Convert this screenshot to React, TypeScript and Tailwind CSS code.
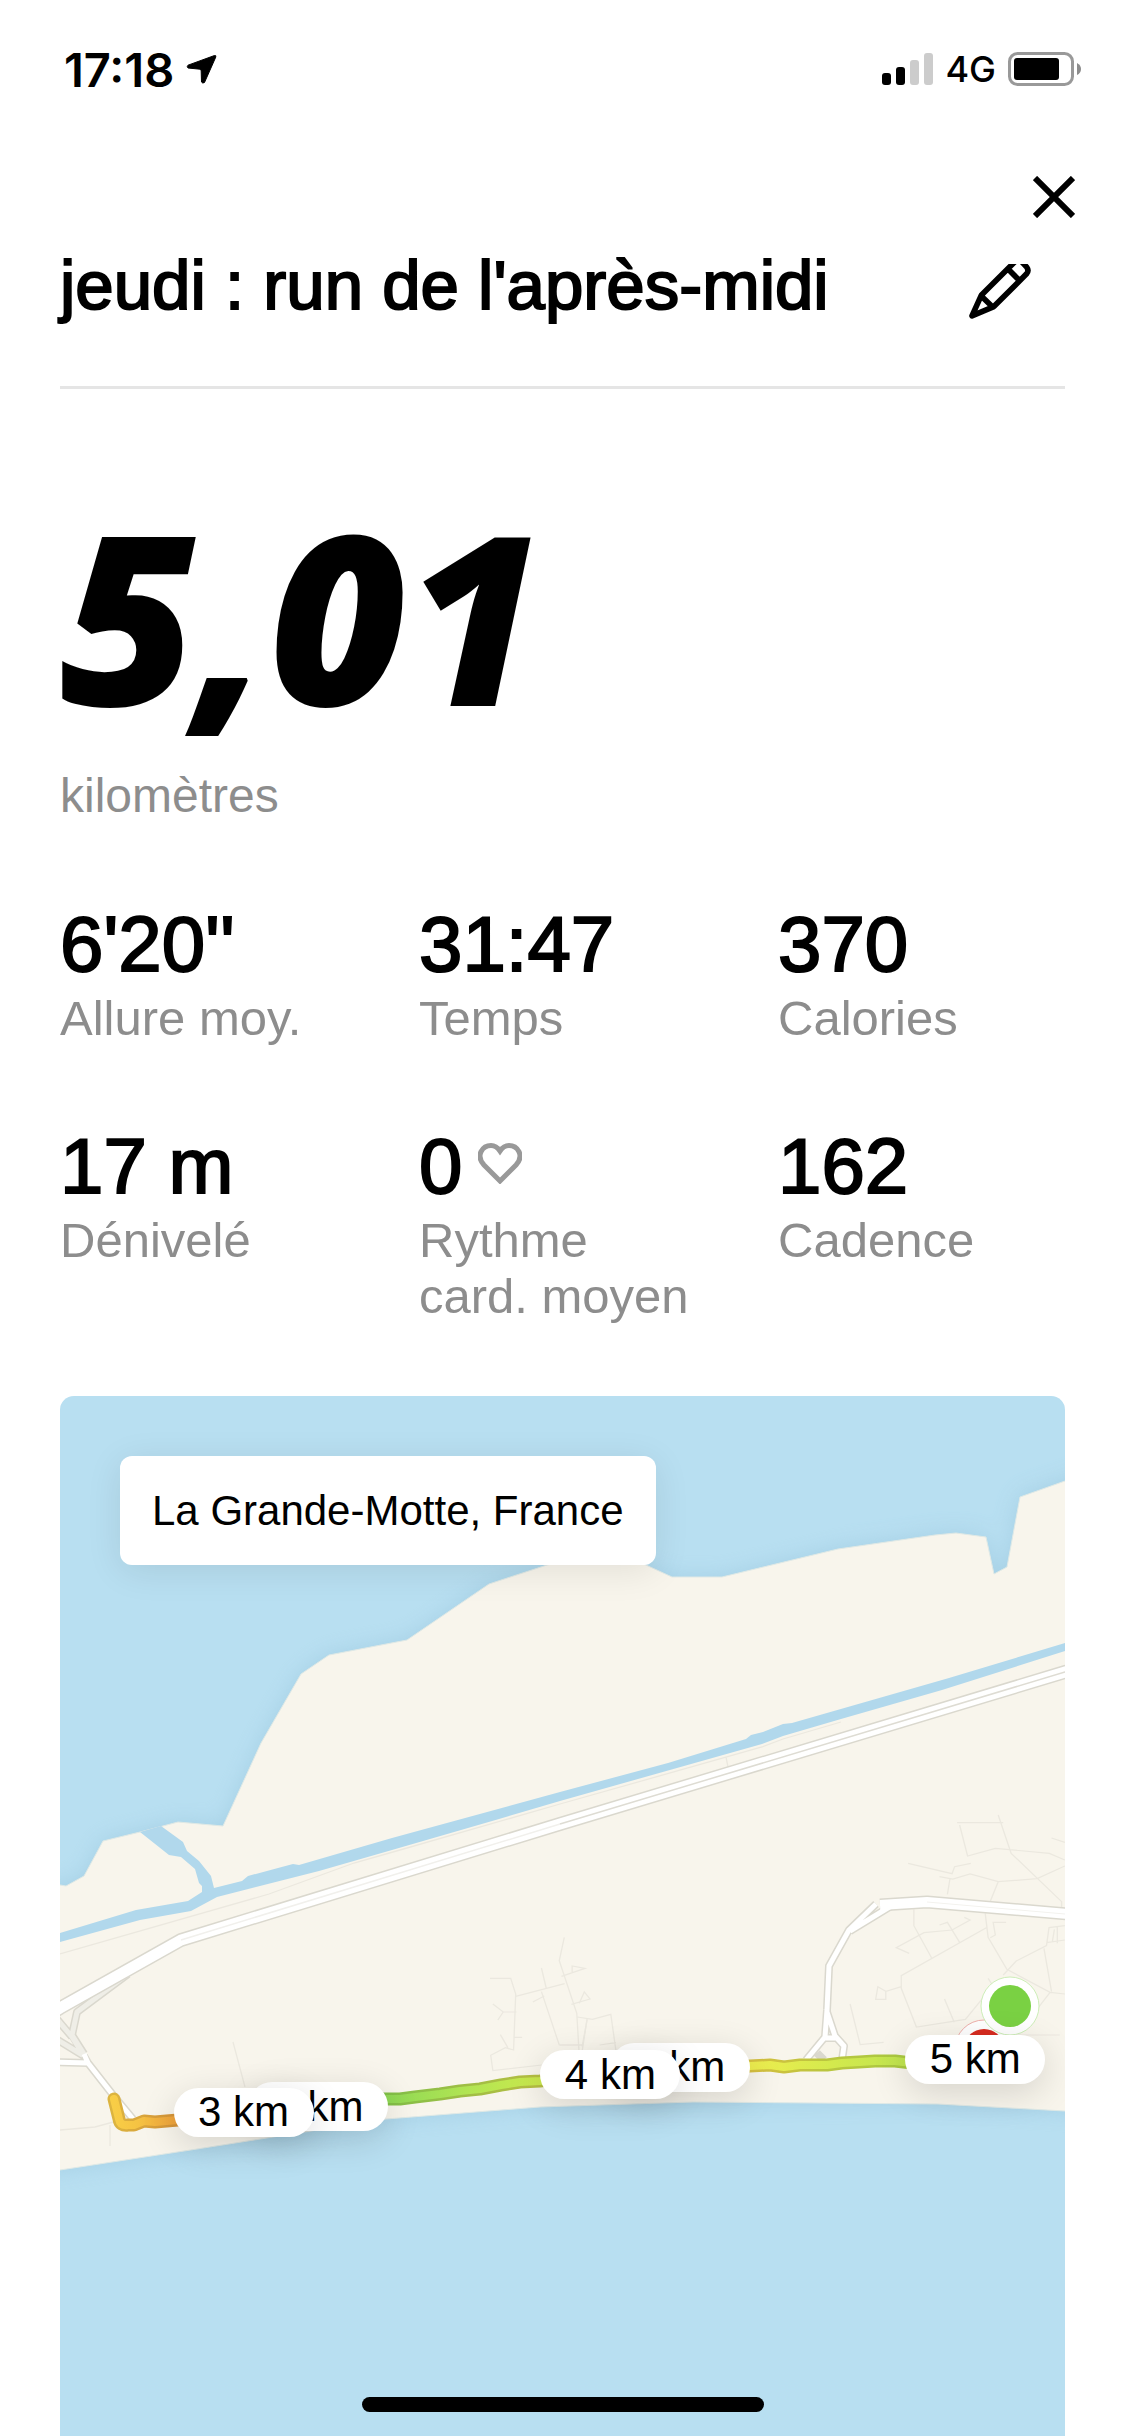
type Stat = { value: string; label: string; heart?: boolean };

const stats: Stat[] = [
  { value: "6'20''", label: "Allure moy." },
  { value: "31:47", label: "Temps" },
  { value: "370", label: "Calories" },
  { value: "17 m", label: "Dénivelé" },
  { value: "0", label: "Rythme card. moyen", heart: true },
  { value: "162", label: "Cadence" },
];

const ROUTE =
  "M114 2099 L119 2119 Q120 2126 128 2125 L134 2125 L144 2121 L155 2122 L178 2120 L250 2113 L330 2104 L383 2099 L400 2099 L415 2097 L440 2094 L460 2091 L480 2089 L501 2085 L520 2082 L540 2081 L620 2072 L700 2068 L750 2066 L770 2065 L784 2067 L800 2065 L827 2065 L842 2063 L859 2062 L875 2061 L895 2061 L912 2063";

function StatusBar() {
  return (
    <div className="flex h-[138px] items-center justify-between pl-[64px] pr-[43px] font-['Inter',sans-serif] text-black">
      <div className="flex items-center gap-3">
        <span className="text-[47px] font-semibold leading-none">17:18</span>
        <svg className="h-[30px] w-[31px]" viewBox="0 0 31 30" aria-hidden="true">
          <path
            d="M28.500 1.500 L2 11.200 Q0.500 12.500 2 14 L14 15.200 Q15.200 15.400 15.200 17 L15.500 28 Q16.500 29.800 18.500 28.500 L29.800 3 Q30.200 1 28.500 1.500 Z"
            stroke="#000"
            strokeLinejoin="round"
          />
        </svg>
      </div>
      <div className="flex items-center gap-3">
        <div className="flex h-8 items-end gap-[5px]" aria-hidden="true">
          <span className="h-3 w-[9px] rounded-[3px] bg-black" />
          <span className="h-[18px] w-[9px] rounded-[3px] bg-black" />
          <span className="h-[25px] w-[9px] rounded-[3px] bg-[#cccccc]" />
          <span className="h-8 w-[9px] rounded-[3px] bg-[#cccccc]" />
        </div>
        <span className="text-[36px] font-medium leading-none">4G</span>
        <svg className="h-[34px] w-[74px]" viewBox="0 0 74 34" aria-hidden="true">
          <rect x="1.500" y="1.500" width="63" height="31" rx="8" fill="none" stroke="#999" strokeWidth="3" />
          <rect x="6" y="6" width="45" height="22" rx="3" />
          <path d="M69 11 Q73 13 73 17 Q73 21 69 23 Z" fill="#8c8c8c" />
        </svg>
      </div>
    </div>
  );
}

function StatItem({ value, label, heart }: Stat) {
  return (
    <div className="flex flex-col-reverse justify-end">
      <dt className="mt-1.5 text-[49px] leading-[56px] text-[#8d8d8d]">{label}</dt>
      <dd className="flex items-center gap-4 text-[78px] leading-[80px] [-webkit-text-stroke:2px_black]">
        {value}
        {heart && (
          <svg className="mb-1.5 h-[41px] w-[44px]" viewBox="0 0 44 41" fill="none" aria-hidden="true">
            <path
              d="M22 38 L6 22 C-3 12 5 2.500 13 2.500 C17 2.500 20 5 22 8 C24 5 27 2.500 31 2.500 C39 2.500 47 12 38 22 Z"
              stroke="#999"
              strokeWidth="5"
            />
          </svg>
        )}
      </dd>
    </div>
  );
}

function KmPill({ text, place }: { text: string; place: string }) {
  return (
    <span
      className={`absolute flex h-[49px] w-[140px] items-center justify-center rounded-full bg-white text-[42px] leading-none shadow-[0_9px_36px_rgba(0,0,0,0.14)] ${place}`}
    >
      {text}
    </span>
  );
}

function MapDrawing() {
  return (
    <svg className="block w-full" viewBox="60 1396 1005 1040" fill="none" aria-hidden="true">
      <defs>
        <filter id="coast" x="-10%" y="-10%" width="120%" height="120%">
          <feGaussianBlur stdDeviation="11" />
        </filter>
        <linearGradient id="route" gradientUnits="userSpaceOnUse" x1="114" y1="0" x2="912" y2="0">
          <stop offset="0" stopColor="#f8cd46" />
          <stop offset="0.030" stopColor="#f5c343" />
          <stop offset="0.080" stopColor="#efa13b" />
          <stop offset="0.337" stopColor="#8ed855" />
          <stop offset="0.440" stopColor="#b0e453" />
          <stop offset="0.530" stopColor="#cae94d" />
          <stop offset="0.800" stopColor="#eeee4f" />
          <stop offset="0.900" stopColor="#d3e94d" />
          <stop offset="1" stopColor="#bee44f" />
        </linearGradient>
        <linearGradient id="routeEdge" gradientUnits="userSpaceOnUse" x1="114" y1="0" x2="912" y2="0">
          <stop offset="0" stopColor="#dcb43f" />
          <stop offset="0.080" stopColor="#d59238" />
          <stop offset="0.337" stopColor="#80c048" />
          <stop offset="0.440" stopColor="#9fbd45" />
          <stop offset="0.530" stopColor="#b6bf42" />
          <stop offset="0.800" stopColor="#d6c03f" />
          <stop offset="0.900" stopColor="#b8c63f" />
          <stop offset="1" stopColor="#a8c940" />
        </linearGradient>
        <path
          id="land"
          d="M40 1885 L60 1885 L66 1886 L84 1876 L103 1841 L140 1832 L178 1822 L223 1826 L261 1743 L301 1674 L329 1655 L407 1640 L489 1584 L547 1565 L600 1552 L646 1565 L672 1577 L722 1577 L838 1549 L935 1535 L956 1533 L986 1537 L994 1574 L1007 1567 L1020 1497 L1065 1481 L1090 1472 L1090 2113 L1065 2111 L938 2104 L693 2102 L600 2105 L540 2107 L386 2119 L311 2131 L197 2149 L60 2170 L40 2173 Z"
        />
      </defs>
      <rect x="60" y="1396" width="1005" height="1040" fill="#b8dff1" />
      <use href="#land" fill="#8fbdd6" opacity="0.450" filter="url(#coast)" />
      <use href="#land" fill="#f8f5ec" stroke="#dfe9e6" strokeWidth="1" />

      <path
        d="M60 1933 L136 1910 L188 1901 L202 1892 L202 1886 L199 1883 L195 1869 L181 1857 L169 1855 L140 1832 L161 1826 L183 1842 L187 1851 L199 1861 L211 1876 L214 1888 L242 1881 L248 1876 L278 1868 L293 1864 L299 1865 L392 1838 L560 1792 L668 1763 L746 1739 L751 1735 L763 1732 L783 1724 L792 1723 L949 1678 L1065 1643 L1065 1651 L980 1678 L942 1690 L841 1719 L783 1736 L762 1744 L560 1801 L499 1819 L392 1850 L319 1871 L217 1897 L191 1911 L140 1920 L60 1942 Z"
        fill="#b1d8ec"
      />

      <g stroke="#ebe8df" strokeWidth="1.300">
        <path d="M60 1954 L269 1894 L354 1863 L400 1850 L560 1804 L762 1747 L783 1739 L841 1722 M726 1757 L728 1767 M233 2042 L245 2087 M60 2130 L95 2127 L117 2121 M110 2125 V2146" />
        <g transform="translate(560 1780) scale(0.36036 0.33333)" strokeWidth="3.700">
          <path d="M1102 128H1230 M1216 105 L1252 220 L1392 365V388 M1109 135 L1131 228 L1208 205 L1358 220 L1401 240 M1364 174 L1401 187 M966 250 L1088 281 L1095 260 L1140 250 M1053 290 L1090 297 L1138 282 L1216 305 L1324 296 L1401 258 M1082 297 L1075 343 M1216 305 L1193 367 M1180 400 L1188 472 L1240 568 L1360 637 L1401 642 M982 388V437L1031 533 M1183 443 L947 587V625L989 741 L1125 718 L1188 635 M969 520 L933 503 L1010 458 L1088 450 L1138 420 L1122 412 M1053 435 L1075 427 L1109 487 M1238 427H1202L1208 465 L1194 473 M1230 585 L1266 543 L1350 497 L1357 443 L1401 437 M1343 505 L1364 635 M1360 637 L1290 735 M1350 488 L1401 480 M1372 448 L1366 487 M1380 440V490 M947 620 L904 634V658H876L882 620L904 634 M1067 657 L1094 727 M1270 765H1387 M805 672 L833 794 L898 787 M1188 595 L1200 615 M48 711 L90 718 L141 703 L155 810 M75 718 L62 810 M0 795H62 M110 795 L155 788" />
        </g>
        <g transform="translate(40 1860) scale(0.35714 0.33333)" strokeWidth="3.700">
          <path d="M1260 355H1318L1332 402L1326 570L1303 563L1262 586L1268 632L1405 615 M1332 409L1469 371 M1404 324L1418 387 M1468 232L1454 302L1503 460L1509 570 M1460 349L1526 325L1490 318V340 M1404 395L1454 555H1520 M1380 426L1412 408 M1488 433L1540 417L1524 396L1510 430 M1268 432L1297 456H1334 M1297 456L1282 480 M1289 524L1310 563 M1326 532H1350 M1532 478L1518 560" />
        </g>
      </g>

      <g strokeLinejoin="round">
        <path
          d="M128 1974 L77 2012 L72 2035 L84 2054 M56 2018 L72 2037 M56 2039 L84 2056"
          stroke="#dad8ce"
          strokeWidth="8"
        />
        <path
          d="M128 1974 L77 2012 L72 2035 L84 2054 M56 2018 L72 2037 L84 2056 M56 2039 L84 2056"
          stroke="#efeee7"
          strokeWidth="5"
        />
        <path d="M84 2056 L88 2063 L113 2095 L133 2119 M50 2062 L88 2063" stroke="#dad8ce" strokeWidth="8" />
        <path d="M84 2054 L88 2063 L113 2095 L133 2119 M50 2062 L88 2063" stroke="#fff" strokeWidth="5" />
      </g>
      <g strokeLinejoin="miter">
        <path d="M40 2020 L60 2008 L181 1940 L560 1824 L1065 1672 L1090 1664" stroke="#dad8ce" strokeWidth="14" />
        <path d="M40 2020 L60 2008 L181 1940 L560 1824 L1065 1672 L1090 1664" stroke="#fff" strokeWidth="11" />
        <path d="M181 1940 L560 1824" stroke="#f1f0ec" strokeWidth="1.500" />
        <path d="M560 1824 L1065 1672 L1090 1664" stroke="#dedcd3" strokeWidth="1.500" />
      </g>
      <g strokeLinejoin="round">
        <path
          d="M891 1906 L850 1931 M876 1904 L849 1930 L829 1966 L827 2010 L825 2037 L806 2060 M827 2012 L835 2036 L844 2046 L842 2060 M824 2038 H836 M817 2053 L824 2060"
          stroke="#dad8ce"
          strokeWidth="8"
        />
        <path d="M1080 1915 L927 1902 L880 1905" stroke="#dad8ce" strokeWidth="13" />
        <path d="M1080 1915 L927 1902 L880 1905" stroke="#fff" strokeWidth="10" />
        <path
          d="M891 1906 L850 1931 M876 1904 L849 1930 L829 1966 L827 2010 L825 2037 L806 2060 M827 2012 L835 2036 L844 2046 L842 2060 M824 2038 H836"
          stroke="#fff"
          strokeWidth="5"
        />
        <path d="M1065 1914 L927 1902" stroke="#f3f2ee" strokeWidth="1" />
      </g>

      <g strokeLinecap="round" strokeLinejoin="round">
        <path d={ROUTE} stroke="url(#routeEdge)" strokeWidth="13" />
        <path d={ROUTE} stroke="url(#route)" strokeWidth="8" />
      </g>
      <circle cx="984" cy="2049" r="29" fill="#fff" stroke="#efb0ac" />
      <circle cx="984" cy="2049" r="20" fill="#d82c20" />
      <circle cx="1010" cy="2006" r="29" fill="#fff" stroke="#cdeeb8" />
      <circle cx="1010" cy="2006" r="21" fill="#7ad143" />
    </svg>
  );
}

export default function App() {
  return (
    <div className="min-h-screen bg-white font-['Liberation_Sans',Arial,sans-serif] text-black">
      <StatusBar />
      <div className="mt-[27px] flex justify-end pr-[39px]">
        <button type="button" aria-label="Fermer" className="flex h-16 w-16 items-center justify-center">
          <svg className="h-[42px] w-[42px]" viewBox="0 0 42 42" aria-hidden="true">
            <path d="M2 2 L40 40 M40 2 L2 40" stroke="#000" strokeWidth="6" />
          </svg>
        </button>
      </div>
      <main className="mx-[60px]">
        <header className="mt-[17px] flex items-start justify-between border-b-[3px] border-[#e5e5e5] pb-[60px] pr-[34px]">
          <h1 className="text-[69px] leading-[80px] [-webkit-text-stroke:2px_black]">
            jeudi : run de l'après-midi
          </h1>
          <button type="button" aria-label="Modifier le titre" className="mt-[18px]">
            <svg className="h-[56px] w-[63px]" viewBox="85 342 190 168" fill="none" aria-hidden="true">
              <path
                d="M97 498 L125 436 L224 337 Q236 326 248 336 L262 351 Q270 362 261 372 L163 470 Z M125 438 L160 472 M205 356 L240 391"
                stroke="#000"
                strokeWidth="17"
                strokeLinejoin="round"
              />
            </svg>
          </button>
        </header>

        <section className="mt-[126px]">
          <p className="font-['Open_Sans',sans-serif] text-[236px] font-extrabold italic leading-[200px]">5,01</p>
          <p className="mt-[53px] text-[48px] leading-[56px] text-[#8d8d8d]">kilomètres</p>
          <dl className="mt-20 grid grid-cols-3 gap-x-[72px] gap-y-20">
            {stats.map((s) => (
              <StatItem key={s.label} {...s} />
            ))}
          </dl>
        </section>

        <section className="relative mt-[72px] overflow-hidden rounded-t-[14px]" aria-label="Carte du parcours">
          <MapDrawing />
          <p className="absolute left-[60px] top-[60px] rounded-xl bg-white px-8 py-[30px] text-[42px] leading-[49px] shadow-[0_6px_36px_rgba(0,0,0,0.09)]">
            La Grande-Motte, France
          </p>
          <KmPill text="1 km" place="left-[54.7%] top-[62.2%]" />
          <KmPill text="2 km" place="left-[18.7%] top-[66%]" />
          <KmPill text="3 km" place="left-[11.3%] top-[66.5%]" />
          <KmPill text="4 km" place="left-[47.8%] top-[62.9%]" />
          <KmPill text="5 km" place="left-[84.1%] top-[61.4%]" />
        </section>
      </main>
      <div className="fixed inset-x-0 bottom-6 mx-auto h-[15px] w-[402px] rounded-full bg-black" />
    </div>
  );
}
